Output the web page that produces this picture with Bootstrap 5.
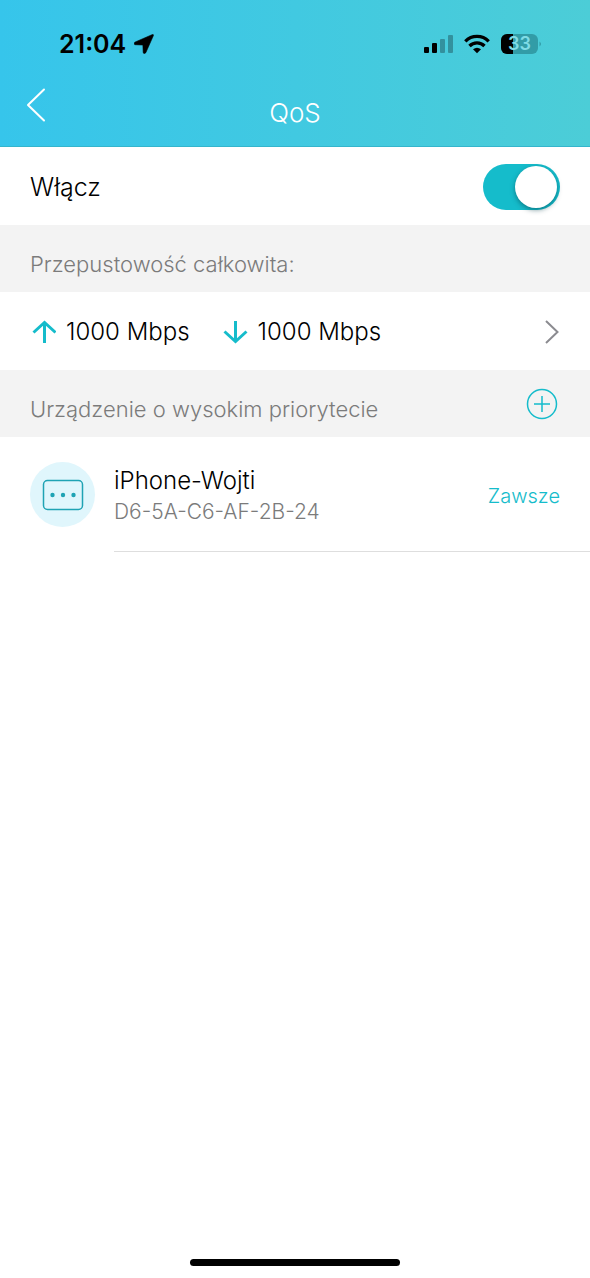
<!DOCTYPE html>
<html lang="pl">
<head>
<meta charset="utf-8">
<meta name="viewport" content="width=device-width, initial-scale=1">
<title>QoS</title>
<link href="https://cdn.jsdelivr.net/npm/bootstrap@5.3.0/dist/css/bootstrap.min.css" rel="stylesheet">
<style>
  :root { --teal: #15bccb; --edge: 30px; }
  body { font-family: Inter, "Liberation Sans", sans-serif; font-weight: 350; font-size: 24px; line-height: 32px; color: #000; background: #fff; }
  .app-head { background: linear-gradient(90deg, #36c5eb, #4ccdd7); border-bottom: 1px solid #35b5cc; }
  .status { height: 80px; padding: 8px 48px 0 59px; }
  .clock { font-size: 25px; font-weight: 600; }
  .battery-num { font-size: 18px; font-weight: 600; fill: #7fdce6; }
  .title-bar { height: 66px; display: grid; grid-template-columns: 1fr auto 1fr; }
  .title-bar h1 { font-size: 26px; font-weight: 350; color: #fff; }
  .back { padding: 8px 26px; height: 50px; }
  .line { min-height: 78px; padding: 2px var(--edge) 0; }
  .line-label { font-size: 25px; }
  .section-head { min-height: 67px; padding: 0 var(--edge); background: #f3f3f3; }
  .section-head h2 { font-size: 22px; line-height: 32px; font-weight: 350; color: #7b7b7b; padding-top: 10px; }
  .form-switch .form-check-input.toggle { float: none; display: block; margin: 0; width: 77px; height: 46px; border: 0; border-radius: 23px; background: var(--teal); appearance: none; position: relative; }
  .toggle::after { content: ""; position: absolute; top: 2px; right: 3px; width: 42px; height: 42px; border-radius: 50%; background: #fff; box-shadow: 0 2px 5px rgba(0,60,70,.5); }
  .toggle:not(:checked) { background: #ccc !important; }
  .toggle:not(:checked)::after { right: 33px; }
  .rate { gap: 10px; }
  .rates { gap: 32px; }
  .device { padding-left: var(--edge); gap: 19px; }
  .avatar { width: 65px; height: 65px; background: #e0f6fc; margin-top: 25px; }
  .device-body { min-height: 115px; padding: 3px var(--edge) 0 0; border-bottom: 1px solid #dedede; }
  .mac { font-size: 21px; line-height: 30px; color: #7b7b7b; }
  .when { font-size: 20px; color: var(--teal); }
  .home-bar { width: 210px; height: 7px; margin-bottom: 12px; background: #000; }
</style>
</head>
<body>
<div class="d-flex flex-column min-vh-100">
  <header class="app-head">
    <div class="status d-flex align-items-center justify-content-between">
      <div class="d-flex align-items-center gap-2">
        <span class="clock">21:04</span>
        <svg width="20" height="20" viewBox="0 0 20 20" aria-hidden="true"><path d="M18.500.5.800 8.200Q-.6 9.700.8 10.700L8.900 11 9.200 18.700Q10 20.400 11.800 18.700L19.400 1.600Q19.700.2 18.500.5z" stroke="#000" stroke-width=".6"/></svg>
      </div>
      <div class="d-flex align-items-center">
        <svg width="118" height="22" viewBox="0 0 118 22" role="img" aria-label="Zasięg, Wi-Fi, bateria 33%">
          <rect x="0" y="14" width="5" height="6" rx="1"/>
          <rect x="8" y="10" width="5" height="10" rx="1"/>
          <g opacity=".28"><rect x="16" y="6" width="5" height="14" rx="1"/><rect x="24" y="2" width="5" height="18" rx="1"/></g>
          <g fill="none" stroke="#000" stroke-width="3.300"><path d="M41.300 8.300a16.500 16.500 0 0 1 23.400 0"/><path d="M45.500 13a10.400 10.400 0 0 1 15 0"/></g>
          <path d="M49 16.200q4-3 8 0l-4 4z"/>
          <clipPath id="cell"><rect x="77" y="1" width="37" height="20" rx="6"/></clipPath>
          <g clip-path="url(#cell)"><rect x="77" y="1" width="37" height="20" fill="#329ca7"/><rect x="77" y="1" width="12" height="20"/></g>
          <path d="M115.500 8.500q3 2.500 0 5z" fill="#329ca7"/>
          <text class="battery-num" x="95.500" y="17" text-anchor="middle">33</text>
        </svg>
      </div>
    </div>
    <div class="title-bar align-items-center">
      <button type="button" class="back btn border-0 align-self-start text-start" aria-label="Wstecz">
        <svg class="d-block" width="20" height="34" viewBox="0 0 20 34" fill="none" stroke="#fff" stroke-width="2" stroke-linecap="round" stroke-linejoin="round"><path d="M18 1.500 2 17 18 32.500"/></svg>
      </button>
      <h1 class="m-0">QoS</h1>
    </div>
  </header>

  <main class="flex-grow-1">
    <div class="line d-flex align-items-center justify-content-between">
      <label class="line-label" for="qos-on">Włącz</label>
      <div class="form-switch p-0 m-0 lh-1"><input class="form-check-input toggle" type="checkbox" role="switch" id="qos-on" checked></div>
    </div>

    <div class="section-head d-flex align-items-center"><h2 class="m-0">Przepustowość całkowita:</h2></div>
    <a href="#bandwidth" class="line d-flex align-items-center justify-content-between text-reset text-decoration-none">
      <span class="rates d-flex">
        <span class="rate d-flex align-items-center">
          <svg width="26" height="24" viewBox="0 0 26 24" fill="none" stroke="#15bccb" stroke-width="3"><path d="M14.500 23V3M3.500 12.500 14.500 2.500 25.500 12.500"/></svg>
          <span>1000 Mbps</span>
        </span>
        <span class="rate d-flex align-items-center">
          <svg width="26" height="24" viewBox="0 0 26 24" fill="none" stroke="#15bccb" stroke-width="3"><path d="M13.500 1V21M2.500 11.500 13.500 21.500 24.500 11.500"/></svg>
          <span>1000 Mbps</span>
        </span>
      </span>
      <svg width="16" height="26" viewBox="0 0 16 26" fill="none" stroke="#8b8b90" stroke-width="2"><path d="M2 2 13.500 13 2 24"/></svg>
    </a>

    <div class="section-head d-flex align-items-center justify-content-between">
      <h2 class="m-0">Urządzenie o wysokim priorytecie</h2>
      <button type="button" class="btn border-0 p-0" aria-label="Dodaj urządzenie">
        <svg class="d-block" width="34" height="32" viewBox="0 0 34 32" fill="none" stroke="#15bccb" stroke-width="1.500"><circle cx="16" cy="16" r="14.500"/><path d="M8 16h16M16 8v16"/></svg>
      </button>
    </div>
    <div class="device d-flex">
      <div class="avatar rounded-circle flex-shrink-0 d-flex align-items-center justify-content-center">
        <svg width="42" height="32" viewBox="0 0 42 32" aria-hidden="true"><rect x="1.500" y="1.500" width="39" height="29" rx="4" fill="none" stroke="#1fa3b4" stroke-width="1.500"/><g fill="#1fa3b4"><circle cx="10.500" cy="16" r="2.200"/><circle cx="21" cy="16" r="2.200"/><circle cx="31.500" cy="16" r="2.200"/></g></svg>
      </div>
      <div class="device-body flex-grow-1 d-flex align-items-center justify-content-between">
        <div>
          <div>iPhone-Wojti</div>
          <div class="mac">D6-5A-C6-AF-2B-24</div>
        </div>
        <a href="#schedule" class="when text-decoration-none">Zawsze</a>
      </div>
    </div>
  </main>
  <div class="home-bar rounded-pill mx-auto"></div>
</div>
<script src="https://cdn.jsdelivr.net/npm/bootstrap@5.3.0/dist/js/bootstrap.bundle.min.js"></script>
</body>
</html>
